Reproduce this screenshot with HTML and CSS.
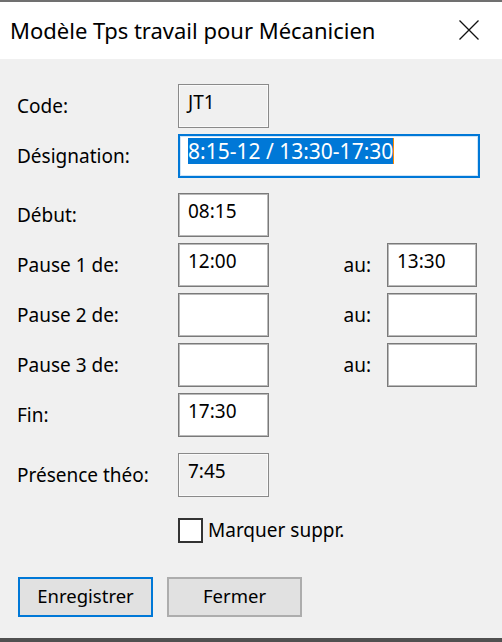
FILE: index.html
```html
<!DOCTYPE html>
<html lang="fr">
<head>
<meta charset="utf-8">
<title>Modèle Tps travail pour Mécanicien</title>
<link rel="stylesheet" href="styles.css">
</head>
<body>
<div class="window">
  <div class="titlebar">
    <div class="title">Modèle Tps travail pour Mécanicien</div>
    <div class="close">
      <svg width="20" height="20" viewBox="0 0 20 20"><path d="M0.5 0.5 L19.5 19.5 M19.5 0.5 L0.5 19.5" stroke="#111" stroke-width="1.3" fill="none"/></svg>
    </div>
  </div>
  <div class="form">
    <div class="row">
      <div class="label">Code:</div>
      <div class="field readonly"><span class="value">JT1</span></div>
    </div>
    <div class="row">
      <div class="label">Désignation:</div>
      <div class="field wide focused"><span class="selected">8:15-12 / 13:30-17:30</span></div>
    </div>
    <div class="row gap-lg">
      <div class="label">Début:</div>
      <div class="field"><span class="value">08:15</span></div>
    </div>
    <div class="row">
      <div class="label">Pause 1 de:</div>
      <div class="field"><span class="value">12:00</span></div>
      <div class="au-label">au:</div>
      <div class="field au"><span class="value">13:30</span></div>
    </div>
    <div class="row">
      <div class="label">Pause 2 de:</div>
      <div class="field"></div>
      <div class="au-label">au:</div>
      <div class="field au"></div>
    </div>
    <div class="row">
      <div class="label">Pause 3 de:</div>
      <div class="field"></div>
      <div class="au-label">au:</div>
      <div class="field au"></div>
    </div>
    <div class="row">
      <div class="label">Fin:</div>
      <div class="field"><span class="value">17:30</span></div>
    </div>
    <div class="row gap-xl">
      <div class="label">Présence théo:</div>
      <div class="field readonly"><span class="value">7:45</span></div>
    </div>
    <div class="check-row">
      <div class="checkbox"></div>
      <div class="check-label">Marquer suppr.</div>
    </div>
    <div class="buttons">
      <div class="button default">Enregistrer</div>
      <div class="button">Fermer</div>
    </div>
  </div>
  <div class="bottom-strip"></div>
</div>
</body>
</html>
```
FILE: styles.css
```css
html, body {
  margin: 0;
  padding: 0;
  background: #f0f0f0;
}
body {
  font-family: "Noto Sans", "Open Sans", sans-serif;
  color: #000;
  font-size: 19px;
}
.window {
  width: 502px;
  height: 642px;
  display: flex;
  flex-direction: column;
  background: #f0f0f0;
  border-top: 2px solid #707070;
  box-sizing: border-box;
}
.titlebar {
  height: 57px;
  background: #fff;
  display: flex;
  align-items: center;
  justify-content: space-between;
  padding: 0 23px 0 10px;
}
.title {
  font-size: 22px;
  padding-bottom: 2px;
}
.close {
  display: flex;
  width: 20px;
  height: 20px;
  margin-top: -2px;
}
.form {
  flex: 1;
  display: flex;
  flex-direction: column;
  padding: 25px 0 0 17px;
}
.row {
  display: flex;
  align-items: center;
  height: 44px;
  margin-top: 6px;
}
.row:first-child { margin-top: 0; }
.row.gap-lg { margin-top: 15px; }
.row.gap-xl { margin-top: 16px; }
.label {
  width: 161px;
  font-size: 19px;
  line-height: 24px;
  padding-bottom: 1px;
}
.field {
  width: 91px;
  height: 44px;
  box-sizing: border-box;
  background: #fff;
  border: 1px solid #7a7a7a;
  box-shadow: inset 0 0 0 1px #b9b9b9;
  align-self: flex-start;
  padding: 5px 0 0 9px;
  font-size: 19px;
  line-height: 24px;
}
.field.readonly {
  background: #f0f0f0;
  border-color: #8a8a8a;
  box-shadow: inset 0 0 0 1px #fafafa;
}
.field.wide {
  width: 302px;
  padding: 2px 0 0 8px;
}
.field.focused {
  border: 2px solid #0078d7;
  box-shadow: inset 0 0 0 1px #cfe4f7;
}
.selected {
  display: inline-block;
  background: #0078d7;
  color: #fff;
  font-size: 21px;
  line-height: 26px;
  border-right: 1px solid #ff8a00;
}
.au-label {
  width: 118px;
  box-sizing: border-box;
  text-align: right;
  padding-right: 16px;
  font-size: 19px;
  line-height: 24px;
  padding-bottom: 1px;
}
.field.au {
  width: 90px;
}
.check-row {
  display: flex;
  align-items: center;
  margin-top: 21px;
  padding-left: 161px;
  height: 25px;
}
.checkbox {
  width: 25px;
  height: 25px;
  box-sizing: border-box;
  border: 2px solid #333;
  background: #fff;
}
.check-label {
  margin-left: 5px;
  font-size: 19px;
  line-height: 24px;
  padding-bottom: 1px;
}
.buttons {
  display: flex;
  gap: 14px;
  margin-top: 34px;
  margin-left: 1px;
}
.button {
  width: 135px;
  height: 40px;
  box-sizing: border-box;
  background: #e1e1e1;
  border: 2px solid #adadad;
  display: flex;
  align-items: center;
  justify-content: center;
  font-size: 18.5px;
  line-height: 24px;
  padding-bottom: 2px;
}
.button.default {
  border-color: #0078d7;
}
.bottom-strip {
  height: 4px;
  background: #505050;
}
```
